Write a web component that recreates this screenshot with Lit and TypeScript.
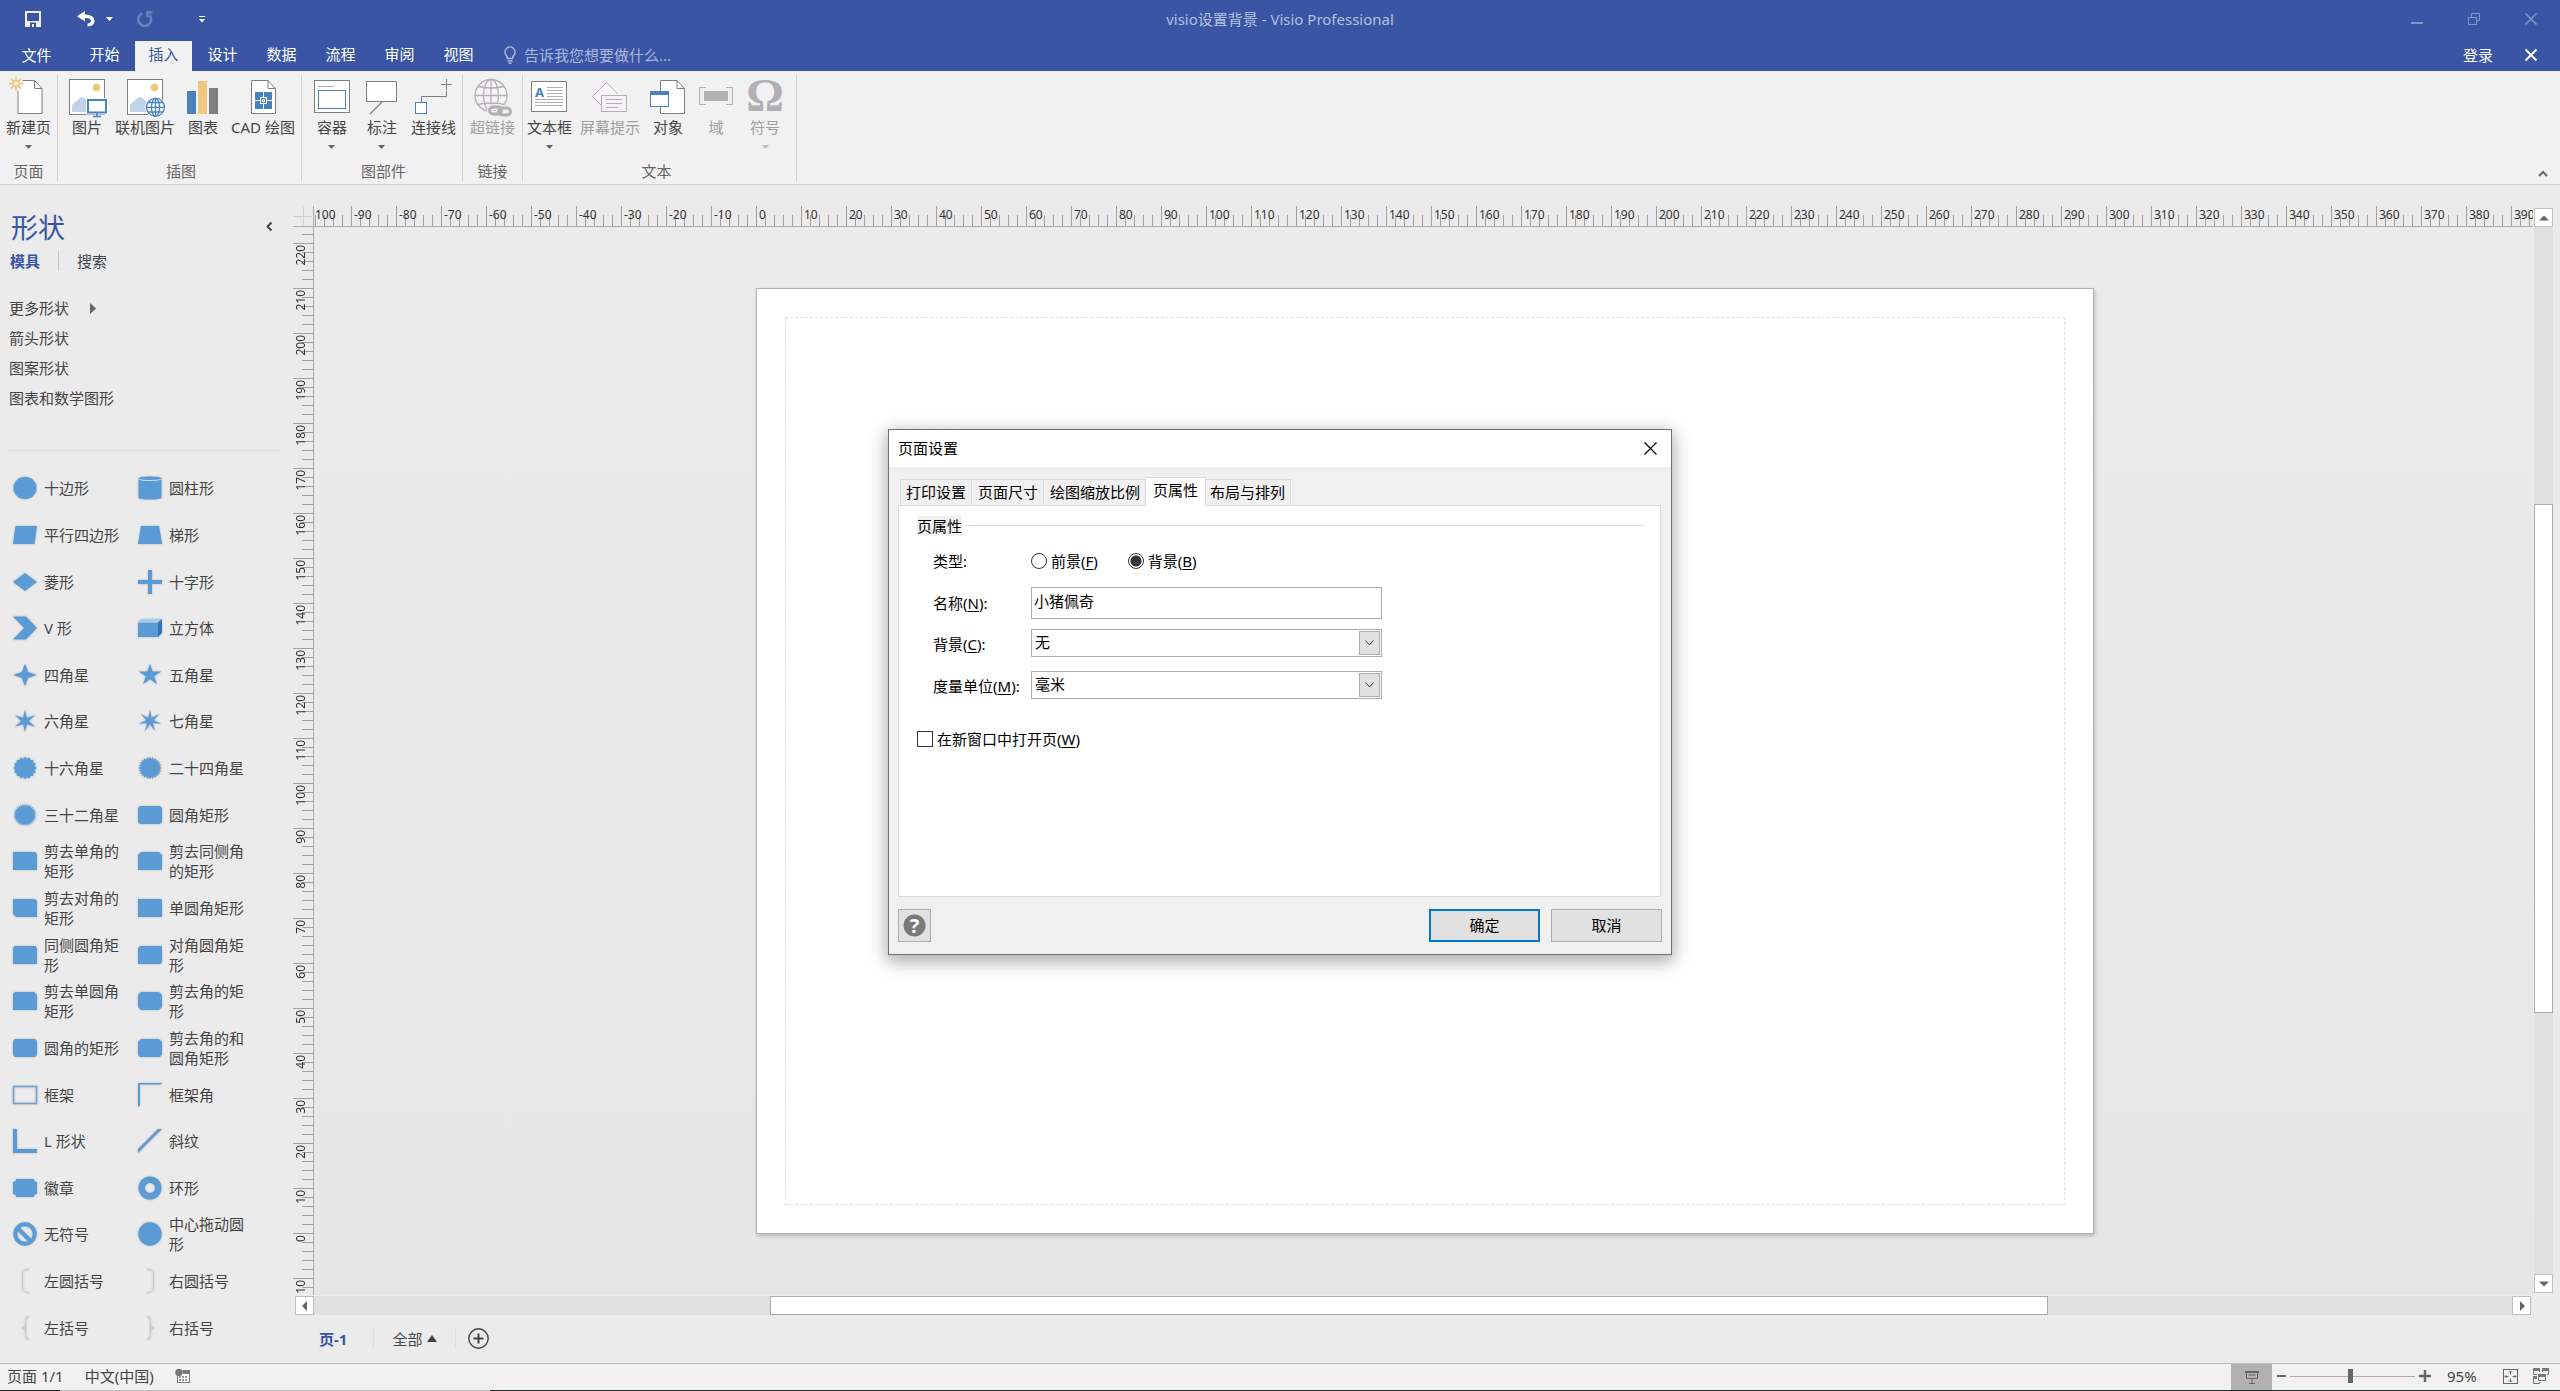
import { LitElement, html, css, svg, nothing, TemplateResult } from "lit";
import { customElement } from "lit/decorators.js";
import { classMap } from "lit/directives/class-map.js";

const base = css`
  * {
    box-sizing: border-box;
  }
  button,
  input,
  select {
    font: inherit;
    color: inherit;
    margin: 0;
    padding: 0;
    border: 0;
    background: none;
    border-radius: 0;
  }
  a {
    color: inherit;
    text-decoration: none;
  }
  svg {
    display: block;
    overflow: visible;
    flex: none;
  }
`;

/* ---------- ribbon icons, 40 x 40 ---------- */

const GREY = "#7f7f7f";
const BLUE = "#4a82bb";
const PALE = "#c0d3e8";
const GOLD = "#efc87e";
const DIM = "#b2b0b2";
const DIM_FILL = "#f6f2f7";

const sheet = (x: number) => svg`
  <path d="M${x} 3.5h16.5l7.5 8v25h-24z" fill="#fff" stroke=${GREY}/>
  <path d="M${x + 16.5} 3.5v8h7.5" fill="none" stroke=${GREY}/>`;

const photo = svg`
  <rect x="2.5" y="2.5" width="35" height="35" fill="#fff" stroke=${GREY}/>
  <circle cx="29.5" cy="10.5" r="3.8" fill=${GOLD}/>
  <path d="M5 35V28l8-7.300q2-1.500 4 0l7 6v8.300z" fill=${PALE}/>`;

const sunRays = [0, 45, 90, 135, 180, 225, 270, 315].map((a) => {
  const r = (a * Math.PI) / 180;
  const c = Math.cos(r);
  const s = Math.sin(r);
  return svg`<path d="M${7 + c * 3.2} ${6.7 + s * 3.2}L${7 + c * 7} ${6.7 + s * 7}" stroke=${GOLD} stroke-width="1.700"/>`;
});

const ribbonIcons: Record<string, unknown> = {
  page: svg`${sheet(9)}<circle cx="7" cy="6.700" r="7.500" fill="#f1f1f1"/>${sunRays}<circle cx="7" cy="6.700" r="3" fill="#f1f1f1" stroke=${GOLD} stroke-width="1.700"/>`,
  picture: svg`${photo}
    <path d="M19 21h22v16.500h-22z" fill="#fff"/>
    <rect x="21" y="23" width="18" height="12.500" fill="#fff" stroke=${BLUE} stroke-width="2"/>
    <path d="M30 36v3M26 39.500h8" stroke=${BLUE} stroke-width="1.500"/>`,
  online: svg`${photo}
    <circle cx="30.500" cy="30.300" r="10.500" fill="#fff"/>
    <g fill="none" stroke=${BLUE} stroke-width="1.300">
      <circle cx="30.500" cy="30.300" r="9"/><ellipse cx="30.500" cy="30.300" rx="4" ry="9"/>
      <path d="M30.500 21.300v18M21.500 30.300h18M23 25.500h15M23 35h15"/>
    </g>`,
  chart: svg`<rect x="4" y="14" width="9" height="23" fill=${BLUE}/><rect x="15" y="4" width="9" height="33" fill=${GOLD}/><rect x="26" y="11" width="9" height="26" fill=${GREY}/>`,
  cad: svg`${sheet(8.5)}<rect x="12" y="15" width="17" height="17" fill=${BLUE}/>
    <path d="M20.500 15v17M12 23.500h17" stroke="#fff"/>
    <rect x="17.500" y="20.500" width="6" height="6" fill=${BLUE} stroke="#fff"/>
    <rect x="19.500" y="22.500" width="2" height="2" fill="none" stroke="#fff"/>`,
  container: svg`<rect x="2.500" y="3.500" width="35" height="32" fill="#fff" stroke=${GREY}/>
    <path d="M6 9.500h16" stroke=${DIM}/><rect x="6.500" y="13.500" width="27" height="18" fill="#fff" stroke=${BLUE}/>`,
  callout: svg`<rect x="4.500" y="4.500" width="30" height="20" fill="#fff" stroke=${GREY}/><path d="M20 25L8 37" stroke=${GREY} stroke-width="1.300"/>`,
  connector: svg`<rect x="2.500" y="25.500" width="11" height="11" fill="#fff" stroke=${BLUE}/>
    <path d="M8.500 25v-5.500h25V14M33.500 2v11M28 7.500h11" fill="none" stroke=${GREY}/>`,
  link: svg`<g fill="none" stroke=${DIM} stroke-width="1.300">
      <circle cx="19" cy="18.500" r="16" fill=${DIM_FILL}/><ellipse cx="19" cy="18.500" rx="7.500" ry="16"/>
      <path d="M19 2.500v32M3 18.500h32M6 9.500q13 3 26 0M6 27.500q13-3 26 0"/>
    </g>
    <g fill="none" stroke="#f1f1f1" stroke-width="6"><rect x="18" y="30" width="12" height="7" rx="3.500"/><rect x="27" y="31" width="12" height="7" rx="3.500"/></g>
    <g fill="none" stroke=${DIM} stroke-width="3"><rect x="17.500" y="30" width="12" height="7" rx="3.500"/><rect x="26.500" y="31" width="12" height="7" rx="3.500"/></g>`,
  textbox: svg`<rect x="2.500" y="4.500" width="35" height="30" fill="#fff" stroke=${GREY}/>
    <text x="6" y="20" font-size="13" font-weight="700" fill=${BLUE}>A</text>
    <path d="M18 10.500h16M18 13.500h16M18 16.500h16M18 19.500h16M6 22.500h28M6 25.500h28M6 28.500h28" stroke=${DIM}/>`,
  tip: svg`<path d="M16.500 5.500L30 19H16.500v9L2.500 19.500z" fill=${DIM_FILL}/>
    <path d="M11 28L2.500 19.500l14-14L28 17" fill="none" stroke=${DIM}/>
    <rect x="11.500" y="18.500" width="25" height="16" fill=${DIM_FILL} stroke=${DIM}/>
    <path d="M16 22.500h16M16 26.500h16M16 30.500h12" stroke=${DIM}/>`,
  object: svg`${sheet(12.5)}<rect x="2.500" y="14.500" width="18" height="15" fill="#fff" stroke=${BLUE}/><path d="M2 14h19v4h-19z" fill=${BLUE}/>`,
  field: svg`<path d="M10 10.500H3.500v17H10M30 10.500h6.500v17H30" fill="none" stroke=${DIM}/><rect x="8" y="14" width="24" height="10" fill=${DIM}/>`,
  symbol: svg`<text class="omega" x="20" y="34" text-anchor="middle" fill=${DIM}>Ω</text>`,
};

interface Tool {
  icon: string;
  label: string;
  menu?: boolean;
  off?: boolean;
}

const groups: { name: string; tools: Tool[] }[] = [
  { name: "页面", tools: [{ icon: "page", label: "新建页", menu: true }] },
  {
    name: "插图",
    tools: [
      { icon: "picture", label: "图片" },
      { icon: "online", label: "联机图片" },
      { icon: "chart", label: "图表" },
      { icon: "cad", label: "CAD 绘图" },
    ],
  },
  {
    name: "图部件",
    tools: [
      { icon: "container", label: "容器", menu: true },
      { icon: "callout", label: "标注", menu: true },
      { icon: "connector", label: "连接线" },
    ],
  },
  { name: "链接", tools: [{ icon: "link", label: "超链接", off: true }] },
  {
    name: "文本",
    tools: [
      { icon: "textbox", label: "文本框", menu: true },
      { icon: "tip", label: "屏幕提示", off: true },
      { icon: "object", label: "对象" },
      { icon: "field", label: "域", off: true },
      { icon: "symbol", label: "符号", menu: true, off: true },
    ],
  },
];

@customElement("visio-header")
export class VisioHeader extends LitElement {
  static styles = [
    base,
    css`
      :host {
        display: block;
      }
      .band {
        background: #3955a3;
        color: #fff;
      }
      .title-row {
        display: grid;
        grid-template-columns: 1fr auto 1fr;
        align-items: center;
        height: 41px;
        padding-bottom: 3px;
      }
      .quick {
        display: flex;
        align-items: center;
        padding-left: 25px;
      }
      .quick button {
        display: flex;
        align-items: center;
      }
      .undo {
        margin-left: 36px;
      }
      .undo-more {
        margin-left: 11px;
      }
      .redo {
        margin-left: 24px;
      }
      .customize {
        margin-left: 46px;
      }
      .doc-title {
        color: #b4c0e0;
      }
      .win {
        display: flex;
        justify-content: flex-end;
        align-items: center;
        gap: 45px;
        padding-right: 23px;
      }
      .tab-row {
        display: flex;
        height: 30px;
      }
      .tab {
        width: 57px;
        margin-right: 2px;
        padding-bottom: 4px;
      }
      .file {
        width: 73px;
        margin-right: 3px;
        padding-bottom: 2px;
      }
      .active {
        background: #f1f1f1;
        color: #3955a3;
      }
      .tell {
        display: flex;
        align-items: center;
        gap: 8px;
        margin-left: 15px;
        padding-bottom: 2px;
        color: #a9b8dd;
      }
      .account {
        display: flex;
        align-items: center;
        gap: 32px;
        margin-left: auto;
        padding: 0 23px 2px 0;
      }
      .ribbon {
        display: flex;
        height: 114px;
        background: #f1f1f1;
        border-bottom: 1px solid #d2d2d2;
        color: #444;
      }
      .group {
        display: flex;
        flex-direction: column;
        justify-content: space-between;
        margin: 4px 0 3px;
        padding: 2px 7px 0;
        border-right: 1px solid #d2d2d2;
      }
      .group:first-of-type {
        padding: 2px 6px 0;
      }
      .group.wide {
        padding: 2px 6px 0 9px;
      }
      .group:last-of-type {
        padding: 2px 10px 0 4px;
      }
      .tools {
        display: flex;
        gap: 8px;
      }
      .tool {
        display: flex;
        flex-direction: column;
        align-items: center;
        justify-content: flex-start;
        min-width: 40px;
        white-space: nowrap;
      }
      .tool.menu {
        min-width: 42px;
      }
      .tool.off {
        color: #a0a0a0;
      }
      .tool svg.drop {
        margin-top: 8px;
      }
      .omega {
        font: 700 47px "Liberation Serif", serif;
      }
      .group-name {
        text-align: center;
        color: #666;
        line-height: 20px;
      }
      .collapse {
        margin: auto 12px 7px auto;
      }
    `,
  ];

  render() {
    const tabs = ["开始", "插入", "设计", "数据", "流程", "审阅", "视图"];
    return html`
      <div class="band title-row">
        <div class="quick">
          <button aria-label="保存">
            <svg width="16" height="16"><path d="M1 1h14v14H1z" fill="none" stroke="#f1f1f1" stroke-width="2" /><path d="M1 10h14v5H1z" fill="#f1f1f1" /><path d="M5 11.500h6V16H9v-3H7v3H5z" fill="#3955a3" /></svg>
          </button>
          <button class="undo" aria-label="撤消">
            <svg width="18" height="16"><path d="M8 0v3.500q9.500 0 9.500 6.500 0 5-7 5.500v-3q3.500-.5 3.500-3 0-2.500-6-2.500V10.500L0 5.200z" fill="#fff" /></svg>
          </button>
          <button class="undo-more" aria-label="撤消列表">
            <svg width="7" height="4"><path d="M0 0h7L3.500 4z" fill="#fff" /></svg>
          </button>
          <button class="redo" aria-label="重复" disabled>
            <svg width="16" height="16" fill="none" stroke="#6c82be" stroke-width="2.500"><path d="M5 2.500A6.500 6.500 0 1 0 12.500 4" /><path d="M15.500 1.300h-5v5" /></svg>
          </button>
          <button class="customize" aria-label="自定义快速访问工具栏">
            <svg width="6" height="7"><path d="M0 0h6v1H0zM0 3h6L3 6.500z" fill="#fff" /></svg>
          </button>
        </div>
        <div class="doc-title">visio设置背景 - Visio Professional</div>
        <div class="win">
          <button aria-label="最小化"><svg width="12" height="12"><path d="M0 9h12v2H0z" fill="#8496c8" /></svg></button>
          <button aria-label="还原">
            <svg width="12" height="12" fill="none" stroke="#8496c8"><path d="M3.500 4V.5h8v7H9" /><rect x=".5" y="4.500" width="8" height="7" /></svg>
          </button>
          <button aria-label="关闭"><svg width="12" height="12"><path d="M.5.5l11 11M11.500.5l-11 11" stroke="#8496c8" stroke-width="1.500" /></svg></button>
        </div>
      </div>
      <div class="band tab-row">
        <button class="file">文件</button>
        ${tabs.map((t) => html`<button class=${classMap({ tab: true, active: t === "插入" })}>${t}</button>`)}
        <button class="tell">
          <svg width="12" height="18" fill="none" stroke="#a9b8dd" stroke-width="1.500"><path d="M3.500 12.500q0-1.500-1.500-3.500A5 5 0 1 1 10 9q-1.500 2-1.500 3.500z" /><path d="M3.500 15h5M4.500 17.300h3" /></svg>
          告诉我您想要做什么...
        </button>
        <div class="account">
          <button>登录</button>
          <button aria-label="关闭文档"><svg width="12" height="12"><path d="M.5.5l11 11M11.500.5l-11 11" stroke="#fff" stroke-width="2" /></svg></button>
        </div>
      </div>
      <div class="ribbon">
        ${groups.map(
          (g) => html`<section class=${classMap({ group: true, wide: g.tools.length > 2 })}>
            <div class="tools">
              ${g.tools.map(
                (t) => html`<button class=${classMap({ tool: true, menu: !!t.menu, off: !!t.off })} ?disabled=${t.off}>
                  <svg width="40" height="40">${ribbonIcons[t.icon]}</svg>
                  <span>${t.label}</span>
                  ${t.menu ? html`<svg class="drop" width="7" height="4"><path d="M0 0h7L3.500 4z" fill=${t.off ? "#bbb" : "#666"} /></svg>` : nothing}
                </button>`
              )}
            </div>
            <div class="group-name">${g.name}</div>
          </section>`
        )}
        <button class="collapse" aria-label="折叠功能区">
          <svg width="10" height="7"><path d="M1 6l4-4 4 4" fill="none" stroke="#666" stroke-width="2" /></svg>
        </button>
      </div>
    `;
  }
}

/* ---------- stencil glyphs, 24 x 24 ---------- */

const star = (points: number, inner: number, rx = 11.8, ry = 11.3) => {
  const pts: string[] = [];
  for (let i = 0; i < points * 2; i++) {
    const k = i % 2 ? inner : 1;
    const a = (Math.PI * i) / points - Math.PI / 2;
    pts.push(`${(12 + Math.cos(a) * rx * k).toFixed(2)},${(12 + Math.sin(a) * ry * k).toFixed(2)}`);
  }
  return svg`<polygon points=${pts.join(" ")}/>`;
};
const path = (d: string) => svg`<path d=${d}/>`;
const bracket = (d: string) => svg`<path d=${d} fill="none" stroke="#c9cccf"/>`;

const shapes: [string, TemplateResult | unknown][] = [
  ["十边形", star(10, 0.98)],
  ["圆柱形", svg`<path d="M.5 2.500q0-2 11.500-2t11.500 2v19q0 2-11.500 2t-11.500-2z"/><path d="M.5 2.500q0 2 11.500 2t11.500-2" fill="none" stroke="#cfe0f0"/>`],
  ["平行四边形", path("M2.500 3H24l-2.500 18H0z")],
  ["梯形", path("M3 3h18l3 18H0z")],
  ["菱形", path("M12 3l12 9-12 9L0 12z")],
  ["十字形", path("M10 0h4v10h10v4H14v10h-4V14H0v-4h10z")],
  ["V 形", path("M0 .5h13L24 12 13 23.500H0L11 12z")],
  ["立方体", svg`<path d="M0 6.500h20V21H0z"/><path d="M0 6.500L3.500 3H24l-4 3.500z" fill="#a9cbea"/><path d="M20 6.500L24 3v14l-4 4z" fill="#2f75b5"/>`],
  ["四角星", star(4, 0.38)],
  ["五角星", star(5, 0.38)],
  ["六角星", star(6, 0.32)],
  ["七角星", star(7, 0.32)],
  ["十六角星", star(16, 0.84)],
  ["二十四角星", star(24, 0.8)],
  ["三十二角星", star(32, 0.78)],
  ["圆角矩形", path("M2 3h20l2 2v14l-2 2H2l-2-2V5z")],
  ["剪去单角的矩形", path("M0 3h22l2 2v16H0z")],
  ["剪去同侧角的矩形", path("M3 3h18l3 3v15H0V6z")],
  ["剪去对角的矩形", path("M0 3h22l2 2v16H3l-3-3z")],
  ["单圆角矩形", path("M0 3h23q1 0 1 2v16H0z")],
  ["同侧圆角矩形", path("M1.500 3h21l1.500 2v16H0V5z")],
  ["对角圆角矩形", path("M2 3h22v16l-1.500 2H0V5z")],
  ["剪去单圆角矩形", path("M2 3h19l3 3v15H0V5z")],
  ["剪去角的矩形", path("M3 3h18l3 3v12l-3 3H3l-3-3V6z")],
  ["圆角的矩形", path("M2 3h20l2 2v14l-2 2H2l-2-2V5z")],
  ["剪去角的和圆角矩形", path("M3 3h18l3 3v12l-2 3H2l-2-2V6z")],
  ["框架", svg`<rect x=".5" y="3.500" width="23" height="17" fill="none" stroke="#6ea0d0" stroke-width="1.500"/>`],
  ["框架角", path("M0 0h24l-1 1.500H2v21l-2 1.500z")],
  ["L 形状", path("M0 0h4v20h20v4H0z")],
  ["斜纹", path("M20 0h4L0 24v-4z")],
  ["徽章", path("M3 3h18q0 3 3 3v12q-3 0-3 3H3q0-3-3-3V6q3 0 3-3z")],
  ["环形", svg`<path fill-rule="evenodd" d="M12 .5a11.500 11.500 0 1 0 0 23 11.500 11.500 0 1 0 0-23zM12 7a5 5 0 1 1 0 10 5 5 0 1 1 0-10z"/>`],
  ["无符号", svg`<circle cx="12" cy="12" r="9.700" fill="none" stroke="#5b9bd5" stroke-width="4"/><path d="M5 6.500l12.500 12.500" stroke="#5b9bd5" stroke-width="4"/>`],
  ["中心拖动圆形", svg`<circle cx="12" cy="12" r="11.700"/>`],
  ["左圆括号", bracket("M16 .5q-6.500 0-6.500 4v15q0 4 6.500 4")],
  ["右圆括号", bracket("M9 .5q6.500 0 6.500 4v15q0 4-6.500 4")],
  ["左括号", bracket("M16 .5q-3.500 0-3.500 4V12H9h3.500v7.500q0 4 3.500 4")],
  ["右括号", bracket("M9 .5q3.500 0 3.500 4V12H16h-3.500v7.500q0 4-3.500 4")],
];

@customElement("shape-panel")
export class ShapePanel extends LitElement {
  static styles = [
    base,
    css`
      :host {
        display: flex;
        flex-direction: column;
        color: #444;
      }
      .head {
        display: flex;
        align-items: flex-start;
        justify-content: space-between;
        padding: 26px 20px 0 11px;
      }
      .head button {
        padding-top: 11px;
      }
      h2 {
        margin: 0;
        font-size: 27px;
        line-height: 34px;
        font-weight: 400;
        color: #3955a3;
      }
      .modes {
        display: flex;
        align-items: center;
        padding: 6px 0 0 10px;
      }
      .modes button + button {
        margin-left: 18px;
        padding-left: 18px;
        border-left: 1px solid #c6c6c6;
      }
      .current {
        font-weight: 700;
        color: #3955a3;
      }
      .stencils {
        display: flex;
        flex-direction: column;
        margin: 22px 13px 0 7px;
        padding: 0 0 37px 2px;
        border-bottom: 1px solid #e0e0e0;
      }
      .stencils a {
        display: flex;
        align-items: center;
        gap: 21px;
        line-height: 30px;
      }
      .shapes {
        flex: 1;
        display: grid;
        grid-template-columns: 125px 125px;
        grid-auto-rows: 1fr;
        margin: 14px 0 12px 13px;
      }
      .shape {
        display: flex;
        align-items: center;
        gap: 7px;
        text-align: left;
        line-height: 20px;
      }
      .shape span {
        width: 78px;
      }
      .shape svg {
        fill: #5b9bd5;
        filter: drop-shadow(0 0 1px #b4b8bc);
      }
    `,
  ];

  render() {
    return html`
      <div class="head">
        <h2>形状</h2>
        <button aria-label="折叠形状窗口"><svg width="7" height="9"><path d="M5.500.5l-4 4 4 4" fill="none" stroke="#444" stroke-width="2" /></svg></button>
      </div>
      <div class="modes"><button class="current">模具</button><button>搜索</button></div>
      <nav class="stencils">
        <a href="#more">更多形状 <svg width="6" height="11"><path d="M0 0l6 5.500L0 11z" fill="#666" /></svg></a>
        <a href="#arrows">箭头形状</a>
        <a href="#patterns">图案形状</a>
        <a href="#charts">图表和数学图形</a>
      </nav>
      <div class="shapes">
        ${shapes.map(([name, glyph]) => html`<button class="shape"><svg width="24" height="24">${glyph}</svg><span>${name}</span></button>`)}
      </div>
    `;
  }
}

@customElement("page-setup-dialog")
export class PageSetupDialog extends LitElement {
  static styles = [
    base,
    css`
      :host {
        display: flex;
        flex-direction: column;
        width: 784px;
        background: #f0f0f0;
        border: 1px solid #707070;
        box-shadow: 0 5px 16px 2px rgba(0, 0, 0, 0.32);
        color: #000;
      }
      .title {
        display: flex;
        align-items: center;
        justify-content: space-between;
        height: 37px;
        padding: 0 14px 0 9px;
        background: #fff;
      }
      .tabs {
        display: flex;
        align-items: flex-end;
        padding: 10px 11px 0;
      }
      .tabs button {
        height: 26px;
        padding: 0 5px;
        border: 1px solid #dcdcdc;
        border-left-width: 0;
        border-bottom: 0;
      }
      .tabs button:first-child {
        border-left-width: 1px;
      }
      .tabs .short {
        padding: 0 5px 0 6px;
      }
      .tabs .on {
        height: 29px;
        margin-bottom: -1px;
        padding: 0 7px 3px;
        background: #fff;
        position: relative;
      }
      .tabs .on + button {
        padding: 0 5px 0 4px;
      }
      .body {
        height: 392px;
        margin: 0 10px 0 9px;
        padding: 10px 16px 0 18px;
        background: #fff;
        border: 1px solid #dcdcdc;
      }
      .legend {
        display: flex;
        align-items: center;
        gap: 4px;
      }
      .legend span {
        background: #f0f0f0;
      }
      .legend::after {
        content: "";
        flex: 1;
        border-top: 1px solid #d0dfea;
      }
      .grid {
        display: grid;
        grid-template-columns: 98px 351px;
        grid-template-rows: 50px 34px;
        grid-auto-rows: 28px;
        padding-left: 16px;
        align-items: center;
      }
      .later {
        margin-top: 9px;
        grid-template-rows: 28px 28px;
        row-gap: 14px;
      }
      .later > label {
        padding-top: 3px;
      }
      .radios {
        display: flex;
        gap: 30px;
      }
      .radios label,
      .check {
        display: flex;
        align-items: center;
        gap: 4px;
      }
      u {
        text-underline-offset: 2px;
      }
      input[type="radio"],
      input[type="checkbox"] {
        appearance: none;
        width: 16px;
        height: 16px;
        border: 1px solid #333;
        background: #fff;
      }
      input[type="radio"] {
        border-radius: 50%;
      }
      input[type="radio"]:checked {
        background: radial-gradient(circle, #333 5px, #fff 6px);
      }
      .field {
        width: 351px;
        height: 32px;
        padding: 0 2px 5px;
        border: 1px solid #ababab;
        background: #fff;
      }
      .combo {
        display: grid;
        grid-template-columns: 1fr 24px;
        align-items: center;
        height: 28px;
        border: 1px solid #ababab;
        background: #fff;
      }
      .combo select {
        grid-area: 1 / 1 / 2 / 3;
        appearance: none;
        height: 26px;
        padding: 0 3px 2px;
      }
      .combo span {
        grid-area: 1 / 2;
        display: flex;
        align-items: center;
        justify-content: center;
        width: 21px;
        height: 24px;
        margin-left: 2px;
        border: 1px solid #ababab;
        background: #e1e1e1;
        pointer-events: none;
      }
      .check {
        margin-top: 30px;
      }
      .foot {
        display: flex;
        align-items: center;
        gap: 11px;
        padding: 12px 9px 12px;
      }
      .foot button {
        width: 111px;
        height: 33px;
        background: #e1e1e1;
        border: 1px solid #adadad;
      }
      .foot .help {
        display: flex;
        align-items: center;
        justify-content: center;
        width: 33px;
        margin-right: auto;
      }
      .foot .ok {
        border: 2px solid #0078d7;
      }
      .q {
        font-weight: 700;
        font-size: 20px;
      }
    `,
  ];

  private arrow = html`<span><svg width="9" height="6"><path d="M.5.5l4 4.500 4-4.500" fill="none" stroke="#444" /></svg></span>`;

  render() {
    return html`
      <div class="title">
        页面设置
        <button aria-label="关闭"><svg width="13" height="13"><path d="M.5.5l12 12M12.500.5l-12 12" stroke="#000" stroke-width="1.200" /></svg></button>
      </div>
      <div class="tabs">
        <button>打印设置</button><button class="short">页面尺寸</button><button class="short">绘图缩放比例</button><button class="on">页属性</button><button>布局与排列</button>
      </div>
      <div class="body">
        <div class="legend"><span>页属性</span></div>
        <div class="grid">
          <span>类型:</span>
          <div class="radios">
            <label><input type="radio" name="kind" /><span>前景(<u>F</u>)</span></label>
            <label><input type="radio" name="kind" checked /><span>背景(<u>B</u>)</span></label>
          </div>
          <label for="name">名称(<u>N</u>):</label>
          <input class="field" id="name" type="text" value="小猪佩奇" />
        </div>
        <div class="grid later">
          <label for="back">背景(<u>C</u>):</label>
          <div class="combo"><select id="back"><option>无</option></select>${this.arrow}</div>
          <label for="unit">度量单位(<u>M</u>):</label>
          <div class="combo"><select id="unit"><option>毫米</option></select>${this.arrow}</div>
        </div>
        <label class="check"><input type="checkbox" /><span>在新窗口中打开页(<u>W</u>)</span></label>
      </div>
      <div class="foot">
        <button class="help" aria-label="帮助">
          <svg width="23" height="23"><circle cx="11.500" cy="11.500" r="11" fill="#7a7a7a" /><text class="q" x="11.500" y="18.500" text-anchor="middle" fill="#fff">?</text></svg>
        </button>
        <button class="ok">确定</button>
        <button>取消</button>
      </div>
    `;
  }
}

const range = (from: number, to: number, step: number) => Array.from({ length: Math.floor((to - from) / step) + 1 }, (_, i) => from + i * step);

@customElement("app-root")
export class AppRoot extends LitElement {
  static styles = [
    base,
    css`
      :host {
        display: flex;
        flex-direction: column;
        position: relative;
        height: 100vh;
        overflow: hidden;
        background: #ebebeb;
        color: #444;
        font-family: "Noto Sans", "Noto Sans CJK SC", sans-serif;
        font-size: 15px;
        line-height: 20px;
      }
      .work {
        flex: 1;
        min-height: 0;
        display: grid;
        grid-template-columns: 293px 1fr;
      }
      .drawing {
        display: grid;
        grid-template-columns: 21px minmax(0, 1fr) 27px;
        grid-template-rows: 21px minmax(0, 1fr) 20px 48px;
        padding-top: 21px;
        min-height: 0;
      }
      .corner {
        border-right: 1px solid #ababab;
        border-bottom: 1px solid #ababab;
        padding: 1px;
      }
      .ruler {
        overflow: hidden;
        color: #333;
        font-size: 12px;
        line-height: 12px;
      }
      .ruler.top {
        border-bottom: 1px solid #ababab;
      }
      .ruler.side {
        border-right: 1px solid #ababab;
      }
      .track-x {
        display: flex;
        height: 20px;
        margin-left: -8px;
        background: repeating-linear-gradient(90deg, #a0a0a0 0 1px, transparent 1px 9px) 0 100% / 100% 11px no-repeat;
      }
      .track-y {
        display: flex;
        flex-direction: column;
        width: 20px;
        margin-top: -29px;
        background: repeating-linear-gradient(180deg, #a0a0a0 0 1px, transparent 1px 9px) 100% 0 / 11px 100% no-repeat;
      }
      .mark-x {
        flex: none;
        width: 45px;
        padding: 3px 0 0 2px;
        border-left: 1px solid #a0a0a0;
      }
      .mark-x:first-child {
        padding-left: 8px;
      }
      .mark-y {
        flex: none;
        height: 45px;
        padding: 1px 0 0 2px;
        border-top: 1px solid #a0a0a0;
      }
      .mark-y span {
        display: block;
        width: 12px;
        writing-mode: vertical-rl;
        transform: rotate(180deg);
      }
      .canvas {
        display: flex;
        padding: 61px 439px 61px 442px;
        background: linear-gradient(#ebebeb, #e6e6e6);
      }
      .page {
        flex: 1;
        display: flex;
        padding: 28px;
        background: #fff;
        border: 1px solid #abb0ba;
        box-shadow: 1px 2px 4px rgba(0, 0, 0, 0.2);
      }
      .margins {
        flex: 1;
        border: 1px dashed #dedede;
      }
      .vscroll {
        grid-area: 1 / 3 / 3 / 4;
        display: flex;
        flex-direction: column;
        padding: 2px 7px 2px 1px;
      }
      .hscroll {
        grid-area: 3 / 1 / 4 / 3;
        display: flex;
        padding: 1px 2px 0;
      }
      .scroll-btn {
        flex: none;
        display: flex;
        align-items: center;
        justify-content: center;
        width: 19px;
        height: 19px;
        background: #fff;
        border: 1px solid #c0c0c0;
      }
      .rail {
        flex: 1;
        display: grid;
        background: #e0e0e0;
      }
      .rail.v {
        grid-template-rows: 277fr 509fr 261fr;
      }
      .rail.h {
        grid-template-columns: 456fr 1278fr 464fr;
      }
      .thumb {
        background: #fff;
        border: 1px solid #ababab;
      }
      .rail.v .thumb {
        grid-row: 2;
      }
      .rail.h .thumb {
        grid-column: 2;
      }
      .pages {
        grid-area: 4 / 1 / 5 / 4;
        display: flex;
        align-items: center;
        padding: 0 0 1px 26px;
      }
      .pages button {
        display: flex;
        align-items: center;
        gap: 5px;
        height: 20px;
      }
      .pages .page-one {
        padding-right: 26px;
        font-weight: 700;
        color: #3955a3;
      }
      .pages .all {
        padding: 0 18px;
        border: solid #dedede;
        border-width: 0 1px;
      }
      .pages .add {
        margin-left: 12px;
      }
      .status {
        display: flex;
        align-items: center;
        height: 27px;
        padding: 0 11px 2px 7px;
        background: #f1f1f1;
        border-top: 1px solid #bdbdbd;
      }
      .status .lang {
        margin: 0 21px;
      }
      .present {
        display: flex;
        align-items: center;
        justify-content: center;
        align-self: flex-start;
        flex: none;
        width: 41px;
        height: 26px;
        margin: 0 5px 0 auto;
        background: #b2b2b2;
      }
      .zoom {
        appearance: none;
        width: 125px;
        height: 16px;
        margin: 0 4px;
        background: linear-gradient(#ababab, #ababab) 0 8px / 100% 1px no-repeat;
      }
      .zoom::-webkit-slider-thumb {
        appearance: none;
        width: 5px;
        height: 14px;
        background: #666;
      }
      .percent {
        width: 34px;
        margin: 0 22px 0 16px;
      }
      .fit {
        margin-right: 15px;
      }
      .edge {
        height: 1px;
        background: linear-gradient(90deg, #222 0 60px, #c0c0c0 60px 490px, #1f2b2b 490px);
      }
      .overlay {
        position: absolute;
        inset: 0;
        display: flex;
        align-items: center;
        justify-content: center;
        padding-bottom: 8px;
      }
    `,
  ];

  private scrollButton(label: string, d: string) {
    return html`<button class="scroll-btn" aria-label=${label}><svg width="10" height="10"><path d=${d} fill="#666" /></svg></button>`;
  }

  render() {
    return html`
      <visio-header></visio-header>
      <main class="work">
        <shape-panel></shape-panel>
        <div class="drawing">
          <div class="corner"><svg width="18" height="18"><path d="M9.500 0v18M0 9.500h18" stroke="#d0d0d0" /></svg></div>
          <div class="ruler top">
            <div class="track-x">${range(-100, 390, 10).map((n) => html`<div class="mark-x">${n === -100 ? 100 : n}</div>`)}</div>
          </div>
          <div class="ruler side">
            <div class="track-y">
              ${range(-10, 230, 10)
                .reverse()
                .map((n) => html`<div class="mark-y">${n === 230 ? nothing : html`<span>${Math.abs(n)}</span>`}</div>`)}
            </div>
          </div>
          <div class="canvas"><div class="page"><div class="margins"></div></div></div>
          <div class="vscroll">
            ${this.scrollButton("向上滚动", "M0 7.500h10l-5-5z")}
            <div class="rail v"><div class="thumb"></div></div>
            ${this.scrollButton("向下滚动", "M0 2.500h10l-5 5z")}
          </div>
          <div class="hscroll">
            ${this.scrollButton("向左滚动", "M7 0v10l-5-5z")}
            <div class="rail h"><div class="thumb"></div></div>
            ${this.scrollButton("向右滚动", "M3 0v10l5-5z")}
          </div>
          <div class="pages">
            <button class="page-one">页-1</button>
            <button class="all">全部 <svg width="10" height="7"><path d="M0 7h10L5 0z" fill="#444" /></svg></button>
            <button class="add" aria-label="插入页">
              <svg width="21" height="21" fill="none" stroke="#444"><circle cx="10.500" cy="10.500" r="9.700" stroke-width="1.400" /><path d="M10.500 5.500v10M5.500 10.500h10" stroke-width="2" /></svg>
            </button>
          </div>
        </div>
      </main>
      <footer class="status">
        <span>页面 1/1</span><span class="lang">中文(中国)</span>
        <button aria-label="宏">
          <svg width="16" height="14"><rect x="2.500" y="2.500" width="12" height="11" fill="#fff" stroke="#777" /><path d="M8 1h7v4H8z" fill="#777" /><circle cx="4" cy="3.500" r="3.700" fill="#777" /><path d="M4 8h9M4 11h9" stroke="#777" stroke-width="1.500" stroke-dasharray="2 1" /></svg>
        </button>
        <button class="present" aria-label="演示模式">
          <svg width="14" height="13" fill="none" stroke="#666"><path d="M0 1h14" stroke-width="2" /><path d="M1.500 1v6.500h11V1M3.500 4h7M7 8v4M4 12.500h6" /></svg>
        </button>
        <button aria-label="缩小"><svg width="9" height="12"><path d="M0 5h9v2H0z" fill="#666" /></svg></button>
        <input class="zoom" type="range" min="0" max="100" value="48" aria-label="缩放" />
        <button aria-label="放大"><svg width="12" height="12"><path d="M0 6h12M6 0v12" stroke="#666" stroke-width="2.500" /></svg></button>
        <span class="percent">95%</span>
        <button class="fit" aria-label="适应窗口大小">
          <svg width="15" height="15" fill="none" stroke="#666"><rect x=".5" y=".5" width="14" height="14" /><path d="M7.500 2v3.500M7.500 9.500V13M2 7.500h3.500M9.500 7.500H13M6 3.500l1.500-1.500L9 3.500M6 11.500L7.500 13 9 11.500M3.500 6L2 7.500 3.500 9M11.500 6L13 7.500 11.500 9" /></svg>
        </button>
        <button aria-label="切换窗口">
          <svg width="16" height="16" fill="none" stroke="#777"><path d="M0 1.500h7M9 1.500h7M5 7.500h8M0 9.500h4" stroke-width="3" /><path d="M.5 1v5.500H4M6.500 1v3M9.500 1v3M15.500 1v5.500H14M5.500 7v5.500h7V7M.5 10v5.500h6V14" /></svg>
        </button>
      </footer>
      <div class="edge"></div>
      <div class="overlay"><page-setup-dialog></page-setup-dialog></div>
    `;
  }
}
